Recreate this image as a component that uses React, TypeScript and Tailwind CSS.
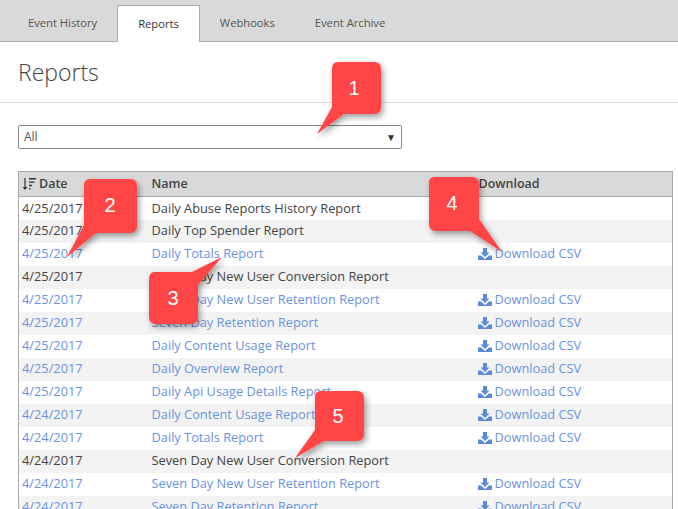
import React from "react";

type Row = { date: string; name: string; link: boolean };

const rows: Row[] = [
  { date: "4/25/2017", name: "Daily Abuse Reports History Report", link: false },
  { date: "4/25/2017", name: "Daily Top Spender Report", link: false },
  { date: "4/25/2017", name: "Daily Totals Report", link: true },
  { date: "4/25/2017", name: "Seven Day New User Conversion Report", link: false },
  { date: "4/25/2017", name: "Seven Day New User Retention Report", link: true },
  { date: "4/25/2017", name: "Seven Day Retention Report", link: true },
  { date: "4/25/2017", name: "Daily Content Usage Report", link: true },
  { date: "4/25/2017", name: "Daily Overview Report", link: true },
  { date: "4/25/2017", name: "Daily Api Usage Details Report", link: true },
  { date: "4/24/2017", name: "Daily Content Usage Report", link: true },
  { date: "4/24/2017", name: "Daily Totals Report", link: true },
  { date: "4/24/2017", name: "Seven Day New User Conversion Report", link: false },
  { date: "4/24/2017", name: "Seven Day New User Retention Report", link: true },
  { date: "4/24/2017", name: "Seven Day Retention Report", link: true },
];

const callouts = [
  { n: 1, path: "M338 62H374Q381 62 381 69V107Q381 114 374 114H344L317 134L332 107V69Q332 62 338 62Z", x: 354, y: 88 },
  { n: 2, path: "M90 179H130Q137 179 137 186V226Q137 233 130 233H96L67 257L84 225V186Q84 179 90 179Z", x: 110, y: 205 },
  { n: 3, path: "M155 272H192L222 257L198 285V317Q198 324 191 324H156Q149 324 149 317V279Q149 272 155 272Z", x: 173, y: 298 },
  { n: 4, path: "M435 177H472Q479 177 479 184V219L502 252L470 231H436Q429 231 429 224V184Q428 177 435 177Z", x: 452, y: 203 },
  { n: 5, path: "M321 391H357Q364 391 364 398V434Q364 441 357 441H324L295 458L315 430V398Q315 391 321 391Z", x: 338, y: 416 },
];

const DownloadIcon = () => (
  <svg width="14" height="12" viewBox="0 0 14 12" fill="#5b8ad8" className="shrink-0">
    <path d="M5 0H9V4.5H11.5L7 9L2.5 4.5H5Z" />
    <path d="M0 7.5H3L7 11L11 7.5H14V12H0Z" />
  </svg>
);

const SortIcon = () => (
  <svg width="14" height="14" viewBox="0 0 14 14" fill="#333" className="shrink-0">
    <path d="M2.4 1H3.6V10H5.5L3 13L0.5 10H2.4Z" />
    <path d="M7 1H14V2.4H7ZM7 4.4H12.5V5.8H7ZM7 7.8H10V9.2H7ZM7 11.2H8.6V12.6H7Z" />
  </svg>
);

const App: React.FC = () => {
  return (
    <div className="relative h-[509px] w-[678px] overflow-hidden bg-white font-['Open_Sans',sans-serif] text-[12.8px] text-[#444]">
      <div className="flex h-[42px] items-end border-b border-[#aaa] bg-[#d9d9d9] pl-2 text-[11.2px] text-[#555]">
        <div className="flex h-[37px] items-center px-5 pt-[1px]">Event History</div>
        <div className="z-10 -mb-px flex h-[37px] items-center border border-b-0 border-[#aaa] bg-white px-5 pt-[1px] text-[#333]">Reports</div>
        <div className="flex h-[37px] items-center px-5 pt-[1px]">Webhooks</div>
        <div className="flex h-[37px] items-center px-5 pt-[1px]">Event Archive</div>
      </div>

      <h1 className="flex h-[61px] items-center border-b border-[#ddd] px-[18px] text-[23px] font-light text-[#444]">Reports</h1>

      <div className="px-[18px] pt-[22px]">
        <div className="relative w-[384px]">
          <select className="block h-[24px] w-full appearance-none rounded-[2px] border border-[#888] bg-white pl-[5px] text-[12px] text-[#555]">
            <option>All</option>
          </select>
          <span className="pointer-events-none absolute top-[7px] right-[6px] text-[10px] leading-[10px] text-[#333]">▼</span>
        </div>
      </div>

      <div className="px-[18px] pt-[22px]">
        <table className="w-[655px] table-fixed border-collapse border border-[#aaa]">
          <colgroup>
            <col className="w-[130px]" />
            <col className="w-[327px]" />
            <col />
          </colgroup>
          <thead>
            <tr className="h-[25px] border-b border-[#aaa] bg-[#d9d9d9] text-left text-[12.5px] text-[#444]">
              <th className="pl-[3px] font-semibold">
                <span className="flex items-center gap-[3px]">
                  <SortIcon />
                  Date
                </span>
              </th>
              <th className="pl-[3px] font-semibold">Name</th>
              <th className="pl-[3px] font-semibold">Download</th>
            </tr>
          </thead>
          <tbody>
            {rows.map((row, i) => (
              <tr key={i} className="h-[23px] even:bg-[#f3f3f3]">
                <td className="pl-[3px]">
                  {row.link ? <a className="text-[#6a93e0]">{row.date}</a> : row.date}
                </td>
                <td className="pl-[3px]">
                  {row.link ? <a className="text-[#6a93e0]">{row.name}</a> : row.name}
                </td>
                <td className="pl-[3px]">
                  {row.link && (
                    <a className="-ml-px flex items-center gap-[3px] text-[#6a93e0]">
                      <DownloadIcon />
                      Download CSV
                    </a>
                  )}
                </td>
              </tr>
            ))}
          </tbody>
        </table>
      </div>

      {/* screenshot annotations */}
      <svg className="pointer-events-none absolute top-0 left-0" width="678" height="509">
        <defs>
          <filter id="shadow" x="-30%" y="-30%" width="160%" height="160%">
            <feDropShadow dx="2" dy="3" stdDeviation="3" floodColor="#000" floodOpacity="0.4" />
          </filter>
        </defs>
        {callouts.map((c) => (
          <path key={c.n} d={c.path} fill="#ff4444" filter="url(#shadow)" />
        ))}
      </svg>
      {callouts.map((c) => (
        <div
          key={c.n}
          className="absolute -translate-x-1/2 -translate-y-1/2 font-['Liberation_Sans',sans-serif] text-[20px] leading-none text-white"
          style={{ left: c.x, top: c.y }}
        >
          {c.n}
        </div>
      ))}
    </div>
  );
};

export default App;
